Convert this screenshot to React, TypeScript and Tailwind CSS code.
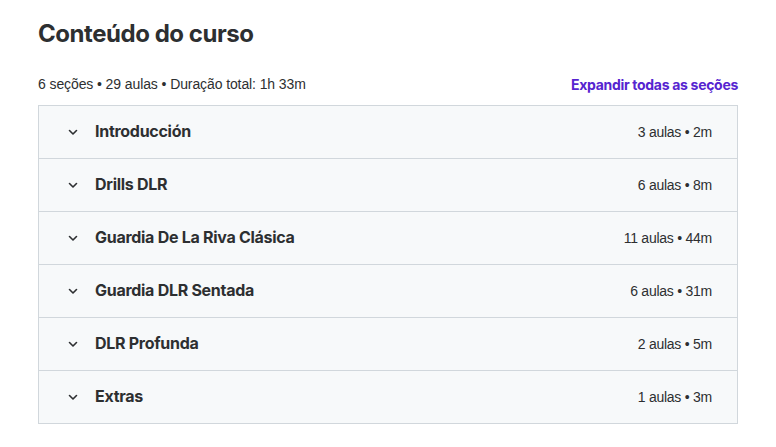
import React from "react";

interface Section {
  title: string;
  info: string;
}

const sections: Section[] = [
  { title: "Introducción", info: "3 aulas • 2m" },
  { title: "Drills DLR", info: "6 aulas • 8m" },
  { title: "Guardia De La Riva Clásica", info: "11 aulas • 44m" },
  { title: "Guardia DLR Sentada", info: "6 aulas • 31m" },
  { title: "DLR Profunda", info: "2 aulas • 5m" },
  { title: "Extras", info: "1 aulas • 3m" },
];

const Chevron = () => (
  <svg width="12" height="12" viewBox="0 0 12 12" fill="none" className="shrink-0">
    <path d="M2.5 4.5 6 8l3.5-3.5" stroke="#2d2f31" strokeWidth="1.6" strokeLinecap="round" strokeLinejoin="round" />
  </svg>
);

export default function App() {
  return (
    <div className="w-[776px] h-[447px] bg-white px-[38px] pt-[18px] font-['Liberation_Sans',Arial,sans-serif] text-[#2d2f31]">
      {/* header */}
      <h2 className="font-['Inter',sans-serif] font-bold text-[24px] leading-[32px] tracking-[-0.45px] mb-[24px]">
        Conteúdo do curso
      </h2>
      <div className="flex items-center justify-between h-[20px] mb-[11px] text-[14px]">
        <span className="tracking-[-0.1px]">6 seções • 29 aulas • Duração total: 1h 33m</span>
        <button className="font-['Inter',sans-serif] font-bold text-[14px] tracking-[-0.3px] text-[#5624d0]">
          Expandir todas as seções
        </button>
      </div>

      {/* sections */}
      <div className="border border-[#d1d7dc] border-b-0 bg-[#f7f9fa]">
        {sections.map((s, i) => (
          <div
            key={i}
            className="flex items-center h-[53px] border-b border-[#d1d7dc] pl-[28px] pr-[25px]"
          >
            <Chevron />
            <span className="ml-[16px] flex-1 font-['Inter',sans-serif] font-bold text-[16px] tracking-[-0.28px] -translate-y-px">
              {s.title}
            </span>
            <span className="text-[14px] tracking-[-0.25px]">{s.info}</span>
          </div>
        ))}
      </div>
    </div>
  );
}
